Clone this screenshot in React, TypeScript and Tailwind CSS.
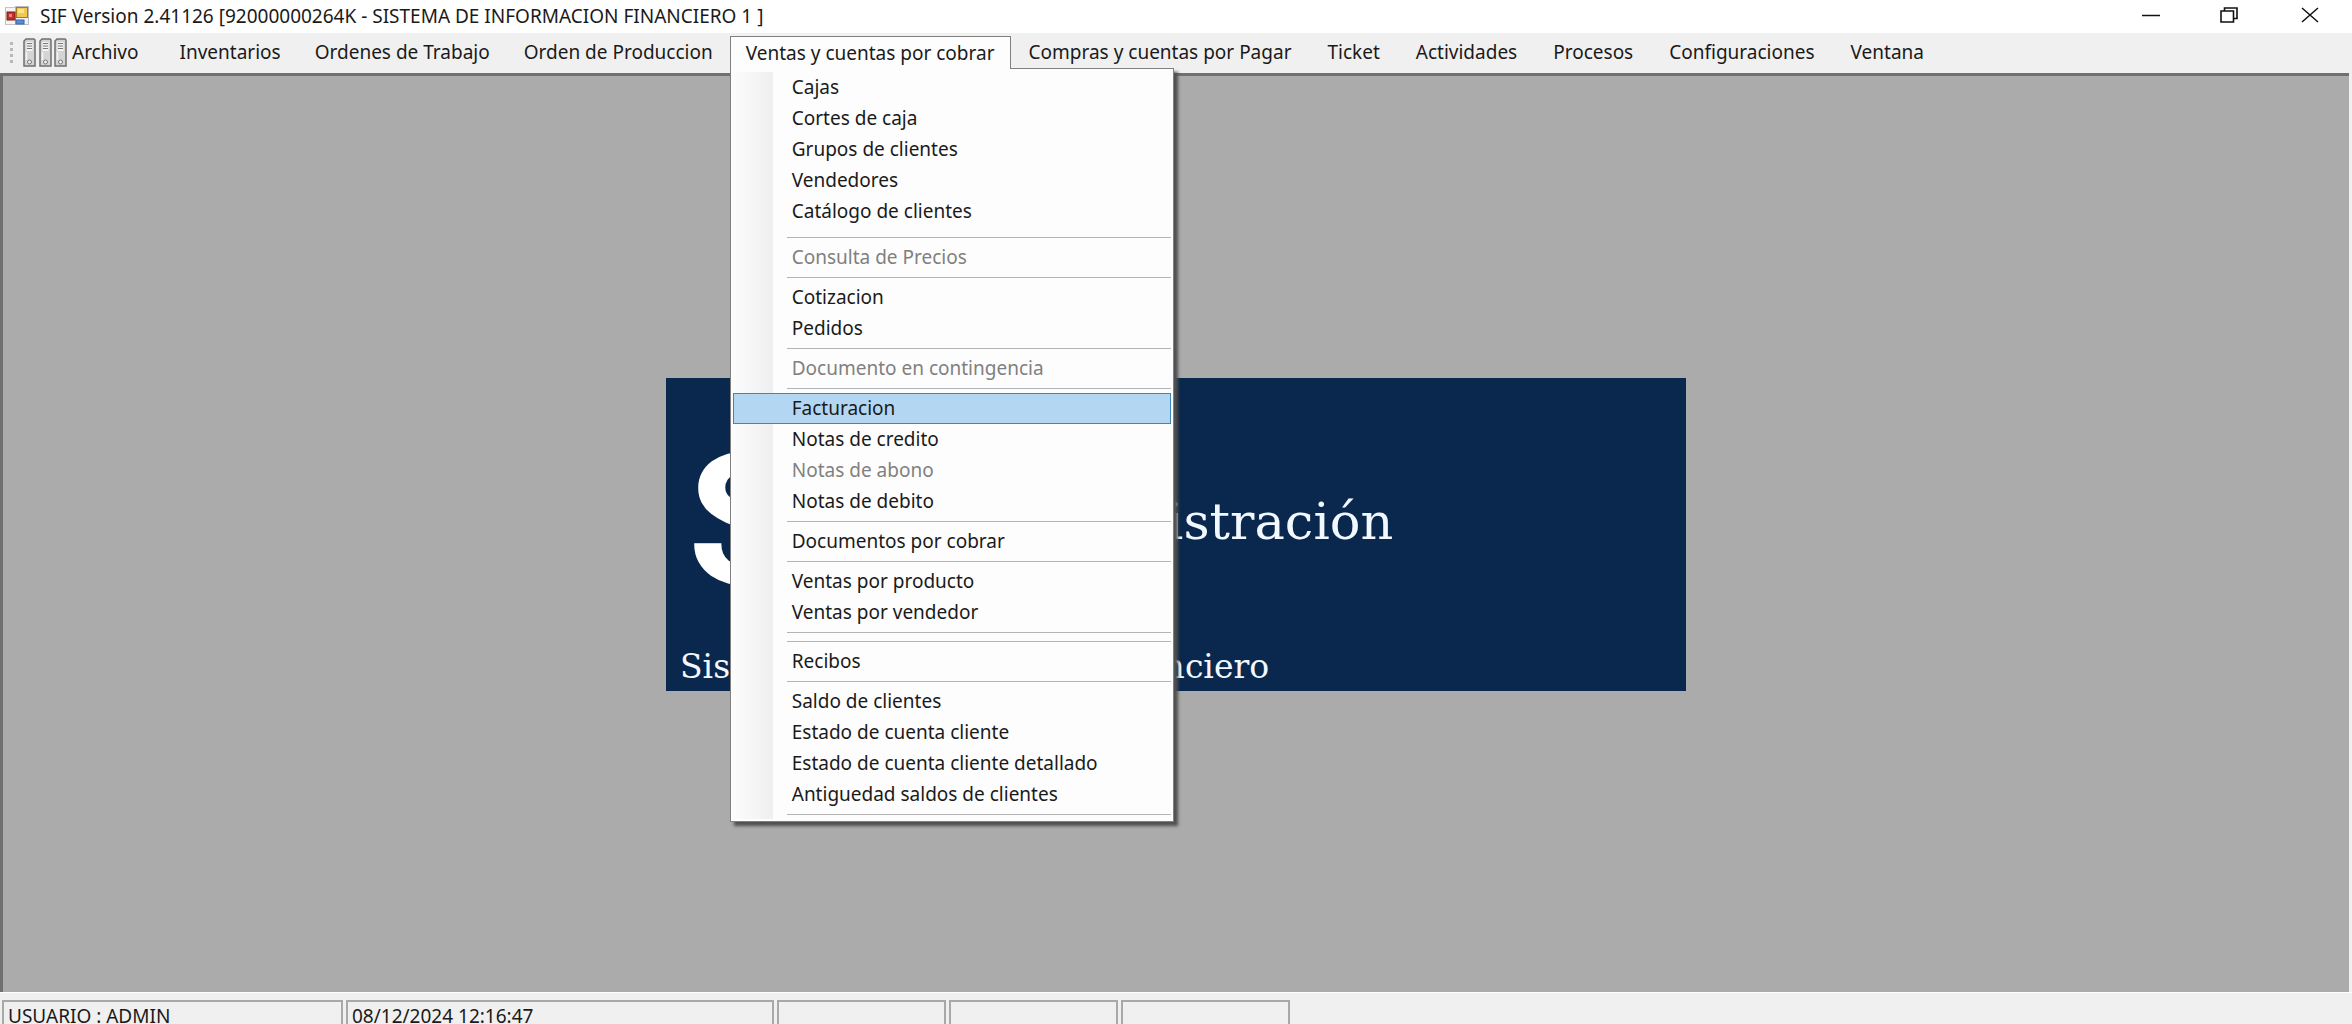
import { clsx } from 'clsx';

interface MenuEntry {
  label: string;
  disabled?: boolean;
  active?: boolean;
}

// Each group is closed by a separator line
const salesMenu: MenuEntry[][] = [
  [
    { label: 'Cajas' },
    { label: 'Cortes de caja' },
    { label: 'Grupos de clientes' },
    { label: 'Vendedores' },
    { label: 'Catálogo de clientes' },
  ],
  [{ label: 'Consulta de Precios', disabled: true }],
  [{ label: 'Cotizacion' }, { label: 'Pedidos' }],
  [{ label: 'Documento en contingencia', disabled: true }],
  [
    { label: 'Facturacion', active: true },
    { label: 'Notas de credito' },
    { label: 'Notas de abono', disabled: true },
    { label: 'Notas de debito' },
  ],
  [{ label: 'Documentos por cobrar' }],
  [{ label: 'Ventas por producto' }, { label: 'Ventas por vendedor' }],
  [],
  [{ label: 'Recibos' }],
  [
    { label: 'Saldo de clientes' },
    { label: 'Estado de cuenta cliente' },
    { label: 'Estado de cuenta cliente detallado' },
    { label: 'Antiguedad saldos de clientes' },
  ],
];

const menusBefore = ['Inventarios', 'Ordenes de Trabajo', 'Orden de Produccion'];
const menusAfter = [
  'Compras y cuentas por Pagar',
  'Ticket',
  'Actividades',
  'Procesos',
  'Configuraciones',
  'Ventana',
];

function AppIcon() {
  return (
    <svg width="25" height="20" viewBox="0 0 25 20" aria-hidden="true">
      <rect x="0.5" y="1.5" width="12" height="17" fill="#f4f4f4" stroke="#c4c4c4" />
      <rect x="10.5" y="0.5" width="13" height="18" fill="#eef1f6" stroke="#b9bcc4" />
      <rect x="2" y="6" width="8" height="8" fill="#c0302a" stroke="#7d1d1a" />
      <rect x="4" y="8" width="3" height="3" fill="#e8857c" />
      <rect x="11.5" y="1.5" width="11" height="10" fill="#f2c94c" stroke="#a67c1c" />
      <rect x="13" y="3" width="6" height="4" fill="#fbe392" />
      <rect x="11" y="14" width="8" height="4" fill="#5b8bd0" stroke="#3c65a8" />
    </svg>
  );
}

function Binder({ x }: { x: number }) {
  return (
    <g transform={`translate(${x} 0)`}>
      <path d="M1 28V3l2-2h8l1 1v26z" fill="#d4d4d4" stroke="#6f6f6f" strokeWidth="1.5" />
      <rect x="3.5" y="4" width="6" height="9" fill="#f3f3f3" />
      <path d="M4 5.5h5M4 8h5M4 10.5h5" stroke="#777" />
      <path d="M3.5 14v8" stroke="#f5f5f5" strokeWidth="1.5" />
      <circle cx="6.5" cy="24" r="2" fill="#eee" stroke="#777" />
    </g>
  );
}

function ArchiveIcon() {
  return (
    <svg width="44" height="29" viewBox="0 0 44 29" aria-hidden="true">
      <Binder x={0} />
      <Binder x={16} />
      <Binder x={31} />
    </svg>
  );
}

function TitleBar() {
  return (
    <header className="flex h-[33px] shrink-0 items-center bg-white pb-[2px] pl-[5px]">
      <AppIcon />
      <h1 className="ml-[10px] flex-1 leading-6">
        SIF Version 2.41126 [92000000264K - SISTEMA DE INFORMACION FINANCIERO 1 ]
      </h1>
      <div className="flex items-center pb-[2px]">
        <button aria-label="Minimizar" className="flex w-[78px] justify-center">
          <svg width="18" height="16" viewBox="0 0 18 16" stroke="#111" strokeWidth="1.5">
            <path d="M0 8.5h18" />
          </svg>
        </button>
        <button aria-label="Restaurar" className="flex w-[78px] justify-center">
          <svg width="18" height="16" viewBox="0 0 18 16" fill="none" stroke="#111" strokeWidth="1.6">
            <path d="M1 4h12.500v11H1z" />
            <path d="M4.500 4V1H17v10.500h-3.500" />
          </svg>
        </button>
        <button aria-label="Cerrar" className="flex w-[84px] justify-center">
          <svg width="18" height="16" viewBox="0 0 18 16" stroke="#111" strokeWidth="1.5">
            <path d="M1 1l16 14M17 1L1 15" />
          </svg>
        </button>
      </div>
    </header>
  );
}

function Dropdown() {
  return (
    <div
      role="menu"
      className="absolute top-full -left-px w-[444px] border border-[#808080] bg-[#fdfdfd] pt-[3px] pb-[2px] shadow-[4px_4px_3px_#505050]"
    >
      <div className="bg-[linear-gradient(to_right,#fdfdfd,#efefef)] bg-[length:42px_100%] bg-no-repeat px-[2px]">
        {salesMenu.map((group, i) => (
          <div key={i}>
            {group.map((entry) => (
              <button
                key={entry.label}
                role="menuitem"
                disabled={entry.disabled}
                className={clsx(
                  'flex h-[31px] w-full items-center border pl-[58px] text-left',
                  entry.active ? 'border-[#3c87b5] bg-[#b3d7f3]' : 'border-transparent',
                  entry.disabled && 'text-[#808080]'
                )}
              >
                {entry.label}
              </button>
            ))}
            <div className={clsx('pb-1 pl-[54px]', i === 0 ? 'pt-[10px]' : 'pt-1')}>
              <div className="h-px bg-[#b4b4b4]" />
            </div>
          </div>
        ))}
      </div>
    </div>
  );
}

function MenuBar() {
  return (
    <nav className="flex h-10 shrink-0 items-stretch bg-[#f0f0f0] pt-[3px] pb-[5px] pl-[10px]">
      <div className="flex flex-col justify-center gap-[3px] pr-[10px]">
        <span className="size-[3px] bg-[#b8b8b8]" />
        <span className="size-[3px] bg-[#b8b8b8]" />
        <span className="size-[3px] bg-[#b8b8b8]" />
        <span className="size-[3px] bg-[#b8b8b8]" />
      </div>
      <button className="flex items-center gap-[5px] pr-6">
        <ArchiveIcon />
        Archivo
      </button>
      {menusBefore.map((label) => (
        <button key={label} className="px-[17px]">
          {label}
        </button>
      ))}
      <div className="relative z-10 border-x border-t border-[#808080] bg-[#fdfdfd]">
        <Dropdown />
        <button aria-expanded="true" className="relative -mb-px h-[33px] bg-[#fdfdfd] px-[15px]">
          Ventas y cuentas por cobrar
        </button>
      </div>
      {menusAfter.map((label) => (
        <button key={label} className="px-[18px]">
          {label}
        </button>
      ))}
    </nav>
  );
}

function Banner() {
  return (
    <section className="flex h-[313px] w-[1020px] flex-col bg-[#0a284d] px-[14px] text-[#f2f8ff]">
      <div className="flex flex-1 items-center gap-[44px] pt-[14px] pl-2">
        <span className="font-['Roboto',sans-serif] text-[184px] leading-none font-bold text-white">SIF</span>
        <span className="font-['DejaVu_Serif',serif] text-[51px] leading-none">Administración</span>
      </div>
      <p className="pb-2 font-['DejaVu_Serif',serif] text-[33px] leading-8">
        Sistema de Información Financiero
      </p>
    </section>
  );
}

function StatusBar() {
  return (
    <footer className="flex h-8 shrink-0 items-start gap-[3px] overflow-hidden border-t border-white bg-[#f0f0f0] pt-[7px] pl-[2px]">
      <div className="h-9 w-[341px] border-2 border-[#a8a8a8] pl-1 leading-7">USUARIO : ADMIN</div>
      <div className="h-9 w-[428px] border-2 border-[#a8a8a8] pl-1 leading-7">08/12/2024 12:16:47</div>
      <div className="h-9 w-[169px] border-2 border-[#a8a8a8]" />
      <div className="h-9 w-[169px] border-2 border-[#a8a8a8]" />
      <div className="h-9 w-[169px] border-2 border-[#a8a8a8]" />
    </footer>
  );
}

export default function App() {
  return (
    <div className="flex h-screen flex-col overflow-hidden bg-[#f0f0f0] font-['Noto_Sans','Open_Sans',sans-serif] text-[19px] text-[#1a1a1a]">
      <TitleBar />
      <MenuBar />
      <main className="mr-[3px] flex flex-1 items-center justify-center border-t-3 border-l-3 border-[#707070] bg-[#ababab]">
        <Banner />
      </main>
      <StatusBar />
    </div>
  );
}
